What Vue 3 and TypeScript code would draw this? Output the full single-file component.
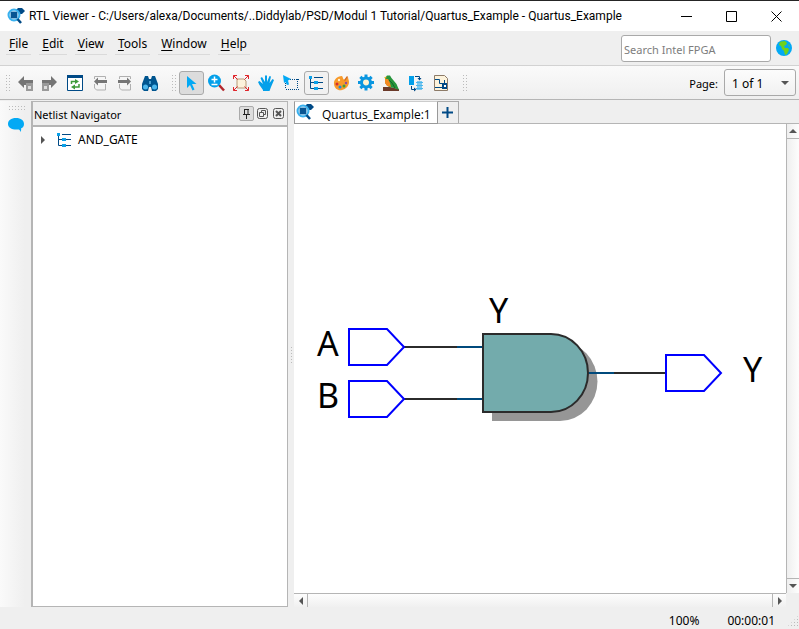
<script setup lang="ts">
import { ref } from 'vue'

interface MenuEntry {
  key: string
  rest: string
}

interface Port {
  name: string
  x: number
  y: number
  labelX: number
}

const title =
  'RTL Viewer - C:/Users/alexa/Documents/..Diddylab/PSD/Modul 1 Tutorial/Quartus_Example - Quartus_Example'

const menus: MenuEntry[] = [
  { key: 'F', rest: 'ile' },
  { key: 'E', rest: 'dit' },
  { key: 'V', rest: 'iew' },
  { key: 'T', rest: 'ools' },
  { key: 'W', rest: 'indow' },
  { key: 'H', rest: 'elp' },
]

const ports: Port[] = [
  { name: 'A', x: 55, y: 223, labelX: 23 },
  { name: 'B', x: 55, y: 275, labelX: 23 },
  { name: 'Y', x: 372, y: 249, labelX: 449 },
]

const gearTeeth = [0, 45, 90, 135, 180, 225, 270, 315]

const tool = ref('select')
const query = ref('')
const page = ref('1 of 1')
</script>

<template>
  <div class="window">
    <svg class="defs" aria-hidden="true">
      <symbol id="logo" viewBox="0 0 18 18">
        <path d="M8 4 11 1h4l3 3-3 3h-3z" fill="#004a86" />
        <circle cx="7" cy="8" r="5.5" fill="#b9e4fb" stroke="#38b0ee" stroke-width="2" />
        <path d="M4 5h6v6H4z" fill="#0e5d9c" />
        <path d="M3 6h8M3 8h8M3 10h8M5 4v8M7 4v8M9 4v8" stroke="#004a86" stroke-width=".5" />
        <path d="M10.500 12 14 16" stroke="#004a86" stroke-width="2.500" />
      </symbol>
      <symbol id="tree" viewBox="0 0 19 19">
        <path d="M3.500 5v10.500H8M3.500 9.500H8M7 4.500h9M11 9.500h5M11 15.500h5" fill="none" stroke="#004a86" />
        <path d="M2 3h3v3H2zM7 8h4v3H7zM7 14h4v3H7z" fill="#0aa0e8" />
      </symbol>
    </svg>

    <header class="titlebar">
      <svg class="logo"><use href="#logo" /></svg>
      <h1>{{ title }}</h1>
      <div class="caption">
        <button aria-label="Minimize"><svg viewBox="0 0 11 11"><path d="M0 5.500h11" /></svg></button>
        <button aria-label="Maximize"><svg viewBox="0 0 11 11"><path d="M.5.5h10v10H.5z" /></svg></button>
        <button aria-label="Close"><svg viewBox="0 0 11 11"><path d="M.5.5l10 10M10.500.5l-10 10" /></svg></button>
      </div>
    </header>

    <div class="menubar">
      <nav>
        <button v-for="m in menus" :key="m.key"><u>{{ m.key }}</u>{{ m.rest }}</button>
      </nav>
      <input v-model="query" class="search" type="search" aria-label="Search Intel FPGA" placeholder="Search Intel FPGA" />
      <svg class="globe" viewBox="0 0 16 16">
        <circle cx="8" cy="8" r="8" fill="#03a9f4" />
        <path d="M5 1.500 9 1l2 2-1 2-2 1 1 2 3 0 1 2-2 4-2 1-1-4-2-2-1-3-2-1 1-3zM12 4l2 2-1 1z" fill="#6fd21c" />
      </svg>
    </div>

    <div class="toolbar">
      <i class="grip"></i>
      <div class="group">
        <button aria-label="Back">
          <svg viewBox="0 0 19 19"><path d="M2 9 8 3v4h9v5H8v3z" fill="#757575" /><path d="M10 10h7v8h-7z" fill="#9a9a9a" /><path d="M12 13h3v3h-3z" fill="#ddd" /></svg>
        </button>
        <button aria-label="Forward">
          <svg viewBox="0 0 19 19"><path d="M16 9 10 3v4H1v5h9v3z" fill="#757575" /><path d="M1 10h7v8H1z" fill="#9a9a9a" /><path d="M3 13h3v3H3z" fill="#ddd" /></svg>
        </button>
        <button aria-label="Refresh">
          <svg viewBox="0 0 19 19">
            <path d="M1.500 3h15v14.500h-15z" fill="#fff" stroke="#004a86" /><path d="M1 2h16v3H1z" fill="#004a86" />
            <path d="M5.500 11V8.500H10M13 11v3H8" fill="none" stroke="#3f9b3a" stroke-width="1.500" />
            <path d="m9 6 4 2.500L9 11zM9 11.500v5L5 14z" fill="#3f9b3a" />
          </svg>
        </button>
        <button aria-label="Previous page">
          <svg viewBox="0 0 19 19"><path d="M3.500 6V3.500h11V6M3.500 11v4l2 2h9v-6" fill="none" stroke="#b0b0b0" /><path d="m3 8.500 4-4V7h9v3H7v2.500z" fill="#757575" /></svg>
        </button>
        <button aria-label="Next page">
          <svg viewBox="0 0 19 19"><path d="M3.500 6V3.500h11V6M3.500 11v4l2 2h9v-6" fill="none" stroke="#b0b0b0" /><path d="m15 8.500-4-4V7H2v3h9v2.500z" fill="#757575" /></svg>
        </button>
        <button aria-label="Find">
          <svg viewBox="0 0 19 19">
            <path d="M4 3h3l1 3h2l1-3h3l3 8v5l-2 2h-4l-1-4H8l-1 4H3l-2-2v-5z" fill="#00558f" />
            <circle cx="4.500" cy="14" r="2.500" fill="#4bb6ec" /><circle cx="13.500" cy="14" r="2.500" fill="#4bb6ec" />
            <path d="M8 8h2v3H8z" fill="#4b9fd0" />
          </svg>
        </button>
      </div>
      <i class="grip"></i>
      <div class="group">
        <button aria-label="Select" :class="{ pressed: tool === 'select' }" @click="tool = 'select'">
          <svg viewBox="0 0 19 19"><path d="M5 3v12l3-3 2.500 5.500 2-1L10 11h4.500z" fill="#03a9f4" /></svg>
        </button>
        <button aria-label="Zoom" @click="tool = 'zoom'">
          <svg viewBox="0 0 19 19">
            <path d="m12 12 5 5.500" stroke="#b3262b" stroke-width="2.500" /><circle cx="7.500" cy="8" r="6.500" fill="#03a0ea" />
            <path d="M4.500 6.500h6M7.500 3.500v6M4.500 11.500h6" stroke="#fff" stroke-width="1.500" />
          </svg>
        </button>
        <button aria-label="Fit in window">
          <svg viewBox="0 0 19 19">
            <path d="M5 6h7l2 2v7H5z" fill="#fdf3dc" stroke="#b79a78" />
            <path d="m1.500 2.500 4 4M16.500 2.500l-4 4M1.500 17.500l4-4M16.500 17.500l-4-4M1.500 6V2.500H5M13 2.500h3.500V6M1.500 14v3.500H5M13 17.500h3.500V14" fill="none" stroke="#e0262c" />
          </svg>
        </button>
        <button aria-label="Hand" @click="tool = 'hand'">
          <svg viewBox="0 0 19 19">
            <path d="M6 17 2.500 12 1 9 2.500 8 6 11 3.500 5 5 4l3 5V2.500h2V9l2.500-6 1.500.5L12.500 10 15.500 6 17 7l-3 7-1.500 4H6z" fill="#03a0ea" />
          </svg>
        </button>
        <button aria-label="Area select">
          <svg viewBox="0 0 19 19"><path d="M4 6.500h13M4 16.500h13M3.500 6v10M15.500 6v10" fill="none" stroke="#004a86" stroke-dasharray="1 1" /><path d="m1 2 8 4-3 1.500 1 4L5 12 3.500 9 2 10z" fill="#03a9f4" /></svg>
        </button>
        <button aria-label="Netlist Navigator" class="pressed light"><svg><use href="#tree" /></svg></button>
        <button aria-label="Colors">
          <svg viewBox="0 0 19 19">
            <path d="M10 3C5 3 1.500 7 2 11c.5 5 4.500 7 8 6 4-1 7-4 7-8 0-2-1-3-1-5l-3 3c-2 0-2-3-3-4z" fill="#f89a2a" />
            <path d="m12 7 3-4 1 1-3 4z" fill="#d2691e" />
            <circle cx="5" cy="11" r="1.500" fill="#d32f2f" /><circle cx="8" cy="14" r="1.500" fill="#1e88e5" /><circle cx="12" cy="13" r="1.500" fill="#3aa33a" /><circle cx="14" cy="10" r="1.200" fill="#8e44ad" /><circle cx="7" cy="7" r="1.200" fill="#fff0d0" />
          </svg>
        </button>
        <button aria-label="Settings">
          <svg viewBox="0 0 19 19">
            <path v-for="a in gearTeeth" :key="a" d="M7.500 1.500h3v4h-3z" fill="#0a96e0" :transform="`rotate(${a} 9 9.500)`" />
            <circle cx="9" cy="9.500" r="4.500" fill="#fff3d0" stroke="#0a96e0" stroke-width="3" />
          </svg>
        </button>
        <button aria-label="Bird's eye view">
          <svg viewBox="0 0 19 19">
            <path d="M1 14h7l9 2v2H1z" fill="#6b3a2a" />
            <path d="M3 5 5 2.500h3L9.500 5l5 6 2.500 6-5-2-5-1-4-4z" fill="#27953c" />
            <path d="M3 6h3l2 4 1 4-4-1-2-3z" fill="#f58a20" />
            <path d="m7 7 3 3 3 5" fill="none" stroke="#12692a" />
            <path d="M2 4.500 4.500 3.500 4 6z" fill="#e8b020" />
          </svg>
        </button>
        <button aria-label="Swap view">
          <svg viewBox="0 0 19 19">
            <path d="M2 3h5v9H2z" fill="#03a0ea" /><path d="M10 8h5v9h-5z" fill="#7cc8ee" /><path d="M9 9.500h7M9 12.500h7M9 15.500h7" stroke="#4bb6ec" />
            <path d="M8 3.500h4.500V6M4.500 13v3.500H8" fill="none" stroke="#004a86" /><path d="M10.500 5h4l-2 2.500zM7 14.500v4l2.500-2z" fill="#004a86" />
          </svg>
        </button>
        <button aria-label="Export schematic">
          <svg viewBox="0 0 19 19">
            <path d="M2.500 2.500h10l3 3v12h-13z" fill="#fdf3dc" stroke="#8d7b68" />
            <path d="M3 6.500h4.500v4h3M3 14.500h8M12.500 7v4" fill="none" stroke="#004a86" /><path d="M10 10h5v6h-5z" fill="#004a86" /><path d="M12 12h2v2h-2z" fill="#fff" />
          </svg>
        </button>
      </div>
      <i class="grip"></i>
      <label class="page" for="page-select">Page:</label>
      <span class="select">
        <select id="page-select" v-model="page"><option>1 of 1</option></select>
      </span>
    </div>

    <main>
      <aside class="strip">
        <i class="grip flat"></i>
        <button aria-label="Messages">
          <svg viewBox="0 0 16 14"><path d="M8 0c5 0 8 2.500 8 6 0 2-1 3.500-3 4.500.5 1.500 0 2.500-1 3.500.5-2-1-2.500-2-2.500C4 12 0 9.500 0 6s3-6 8-6z" fill="#03a9f4" /></svg>
        </button>
      </aside>

      <section class="navigator">
        <div class="panel-head">
          <h2>Netlist Navigator</h2>
          <button class="pin" aria-label="Pin"><svg viewBox="0 0 11 11"><path d="M3.500 1v5M2 6.500h7M7 1v5M3 1.500h5M5.500 7v4" fill="none" stroke="#222" /></svg></button>
          <button aria-label="Float"><svg viewBox="0 0 11 11"><rect x=".5" y=".5" width="10" height="10" rx="2" /><path d="M2.500 4.500h4v4h-4zM4.500 4V2.500h4v4H7" /></svg></button>
          <button aria-label="Close panel"><svg viewBox="0 0 11 11"><rect x=".5" y=".5" width="10" height="10" rx="2" /><path d="m3 3 5 5M8 3 3 8" stroke-width="2" /></svg></button>
        </div>
        <ul class="tree">
          <li><i class="twisty"></i><svg><use href="#tree" /></svg><span>AND_GATE</span></li>
        </ul>
      </section>

      <div class="splitter"><i></i></div>

      <section class="viewer">
        <div class="tabs">
          <button class="tab"><svg class="logo"><use href="#logo" /></svg><span>Quartus_Example:1</span></button>
          <button class="add" aria-label="New tab"><svg viewBox="0 0 11 11"><path d="M5.500 0v11M0 5.500h11" stroke="#004a86" stroke-width="2" /></svg></button>
        </div>
        <div class="canvas">
          <svg class="schematic" viewBox="0 0 492 469">
            <path d="M198 218h68a37 39 0 0 1 0 79h-68z" fill="#969696" />
            <g fill="none" stroke-width="2">
              <path d="M110 223h53M110 275h53M320 249h52" stroke="#2b2b2b" />
              <path d="M163 223h26M163 275h26M294 249h26" stroke="#004a7c" />
              <path v-for="p in ports" :key="p.name" :transform="`translate(${p.x} ${p.y})`" d="M0-18h38L55 0 38 18H0z" stroke="#00f" />
            </g>
            <path d="M189 210h68a37 39 0 0 1 0 78h-68z" fill="#73abac" stroke="#2b2b2b" stroke-width="2" />
            <text v-for="p in ports" :key="p.name" :x="p.labelX" :y="p.y + 9">{{ p.name }}</text>
            <text x="195" y="199">Y</text>
          </svg>
        </div>
        <div class="bar vertical"><button class="up" aria-label="Scroll up"></button><button class="down" aria-label="Scroll down"></button></div>
        <div class="bar horizontal"><button class="left" aria-label="Scroll left"></button><button class="right" aria-label="Scroll right"></button></div>
      </section>
    </main>

    <footer><span>100%</span><span>00:00:01</span><i class="size-grip"></i></footer>
  </div>
</template>

<style>
body {
  background: #efefef;
}
</style>

<style scoped>
* {
  box-sizing: border-box;
}
.window {
  display: flex;
  flex-direction: column;
  min-height: 100vh;
  font: 11px/16px "Noto Sans", sans-serif;
  color: #000;
  background: #efefef;
}
button,
input,
select {
  font: inherit;
  color: inherit;
  padding: 0;
  margin: 0;
  border: 0;
  background: none;
}
h1,
h2,
ul {
  margin: 0;
  padding: 0;
  font: inherit;
  list-style: none;
}
svg {
  display: block;
  flex: none;
}
.defs {
  position: absolute;
  width: 0;
  height: 0;
}
.logo {
  width: 18px;
  height: 18px;
}
.titlebar {
  display: flex;
  align-items: center;
  height: 31px;
  padding-left: 7px;
  gap: 4px;
  background: #fff;
  border-top: 1px solid #252525;
}
h1 {
  flex: 1;
  white-space: nowrap;
  font: 12px/16px Roboto, sans-serif;
}
.caption {
  display: flex;
}
.caption button {
  display: grid;
  place-items: center;
  width: 45px;
  height: 29px;
}
.caption svg {
  width: 11px;
  height: 11px;
  fill: none;
  stroke: #000;
}
.menubar {
  display: flex;
  align-items: center;
  height: 34px;
  padding: 0 7px 0 6px;
}
nav {
  display: flex;
  flex: 1;
  gap: 8px;
  align-self: flex-start;
  padding-top: 4px;
}
nav button {
  padding: 1px 3px 2px;
  font-size: 12px;
  border-bottom: 1px solid #dadada;
}
u {
  text-underline-offset: 2px;
}
.search {
  width: 150px;
  height: 27px;
  padding: 2px 2px 0;
  border: 1px solid #a9a9a9;
  border-radius: 3px;
  background: #fff;
  appearance: none;
}
.search::placeholder {
  color: #7d7d7d;
}
.globe {
  width: 16px;
  height: 16px;
  margin-left: 5px;
}
.toolbar {
  display: flex;
  align-items: center;
  height: 35px;
  padding: 0 3px 0 5px;
  border-top: 1px solid #d2d2d2;
  border-bottom: 1px solid #b5b5b5;
  background: linear-gradient(#fafafa, #efefef);
}
.grip {
  width: 5px;
  height: 17px;
  margin-right: 3px;
  background: radial-gradient(circle at 50% 50%, #bbb 0 1px, transparent 1px) 0 0 / 3px 3px;
}
.group {
  display: flex;
  margin-right: 8px;
}
.group button {
  display: grid;
  place-items: center;
  width: 25px;
  height: 24px;
  border: 1px solid transparent;
  border-radius: 3px;
}
.group svg {
  width: 19px;
  height: 19px;
}
.group .pressed {
  border-color: #aaa;
  background: #dcdcdc;
}
.group .light {
  background: #f1f1f1;
}
.page {
  margin-left: auto;
  padding-top: 2px;
}
.select {
  position: relative;
  margin-left: 6px;
}
.select::after {
  content: "";
  position: absolute;
  top: 12px;
  right: 7px;
  border: 4px solid transparent;
  border-top-color: #555;
  border-bottom: 0;
  pointer-events: none;
}
select {
  width: 72px;
  height: 27px;
  padding: 3px 7px 0;
  font-size: 12px;
  border: 1px solid #a9a9a9;
  border-radius: 3px;
  background: linear-gradient(#fcfcfc, #f1f1f1);
  appearance: none;
}
main {
  display: flex;
  flex: 1;
  padding-top: 1px;
}
.strip {
  width: 31px;
  padding: 4px 8px;
  background: linear-gradient(90deg, #fafafa, #efefef 80%);
}
.grip.flat {
  display: block;
  width: 17px;
  height: 5px;
}
.strip svg {
  width: 16px;
  height: 14px;
  margin-top: 8px;
}
.navigator {
  display: flex;
  flex-direction: column;
  width: 257px;
  border: 1px solid #b5b5b5;
  border-left-width: 2px;
  background: #fff;
}
.panel-head {
  display: flex;
  align-items: center;
  gap: 5px;
  height: 25px;
  padding: 0 3px 0 1px;
  border-bottom: 2px solid #b5b5b5;
  background: #efefef;
}
h2 {
  flex: 1;
  padding-top: 2px;
}
.panel-head svg {
  width: 11px;
  height: 11px;
  fill: none;
  stroke: #555;
}
.panel-head .pin {
  margin-right: -2px;
  padding: 1px;
  border: 1px solid #aaa;
  border-radius: 2px;
  background: #ddd;
}
.tree li {
  display: flex;
  align-items: center;
  padding: 3px 7px;
  font-size: 12px;
}
.tree svg {
  width: 19px;
  height: 19px;
  margin: 0 4px 0 10px;
}
.twisty {
  border: 4px solid transparent;
  border-left-color: #555;
  border-right: 0;
  margin-left: 1px;
}
.splitter {
  display: grid;
  place-items: center;
  width: 6px;
}
.splitter i {
  width: 3px;
  height: 17px;
  background: radial-gradient(circle at 50% 50%, #bbb 0 1px, transparent 1px) 0 0 / 3px 3px;
}
.viewer {
  display: grid;
  flex: 1;
  grid-template: 23px 1fr 14px / 1fr 13px;
  min-width: 0;
}
.tabs {
  grid-column: 1 / 3;
  display: flex;
  border-bottom: 1px solid #b5b5b5;
}
.tab {
  display: flex;
  align-items: center;
  gap: 8px;
  height: 23px;
  padding: 0 6px 0 1px;
  font: 12px/16px "Open Sans", sans-serif;
  border: 1px solid #999;
  border-top-color: #ccc;
  background: #fff;
}
.tab span {
  padding-top: 4px;
}
.tab svg {
  margin-bottom: 2px;
}
.add {
  display: grid;
  place-items: center;
  width: 21px;
  border: 1px solid #aaa;
  border-left: 0;
  border-bottom: 0;
}
.add svg {
  width: 11px;
  height: 11px;
}
.canvas {
  display: flex;
  min-height: 0;
  background: #fff;
}
.schematic {
  width: 100%;
  height: auto;
}
.schematic text {
  font: 34px "Noto Sans", sans-serif;
}
.bar {
  display: flex;
  justify-content: space-between;
}
.vertical {
  flex-direction: column;
  border-left: 1px solid #b5b5b5;
  background: linear-gradient(90deg, #efefef, #fdfdfd);
}
.horizontal {
  border-top: 1px solid #b5b5b5;
  background: linear-gradient(#fdfdfd, #f0f0f0);
}
.bar button {
  display: grid;
  place-items: center;
  width: 14px;
  height: 13px;
}
.bar button::before {
  content: "";
  border: 4px solid transparent;
}
.bar.vertical button {
  width: 12px;
  height: 15px;
}
.up {
  border-bottom: 1px solid #b5b5b5;
}
.down {
  border-top: 1px solid #b5b5b5;
}
.left {
  border-right: 1px solid #b5b5b5;
}
.right {
  border-left: 1px solid #b5b5b5;
}
.bar .up::before {
  border-bottom-color: #555;
  border-top: 0;
}
.bar .down::before {
  border-top-color: #555;
  border-bottom: 0;
}
.bar .left::before {
  border-right-color: #555;
  border-left: 0;
}
.bar .right::before {
  border-left-color: #555;
  border-right: 0;
}
footer {
  display: flex;
  align-items: center;
  justify-content: flex-end;
  gap: 28px;
  height: 22px;
  padding-top: 6px;
  font-size: 12px;
}
.size-grip {
  width: 12px;
  height: 12px;
  margin-left: -16px;
  background: radial-gradient(circle at 50% 50%, #bbb 0 1px, transparent 1px) 0 0 / 3px 3px;
  clip-path: polygon(100% 0, 100% 100%, 0 100%);
}
</style>
